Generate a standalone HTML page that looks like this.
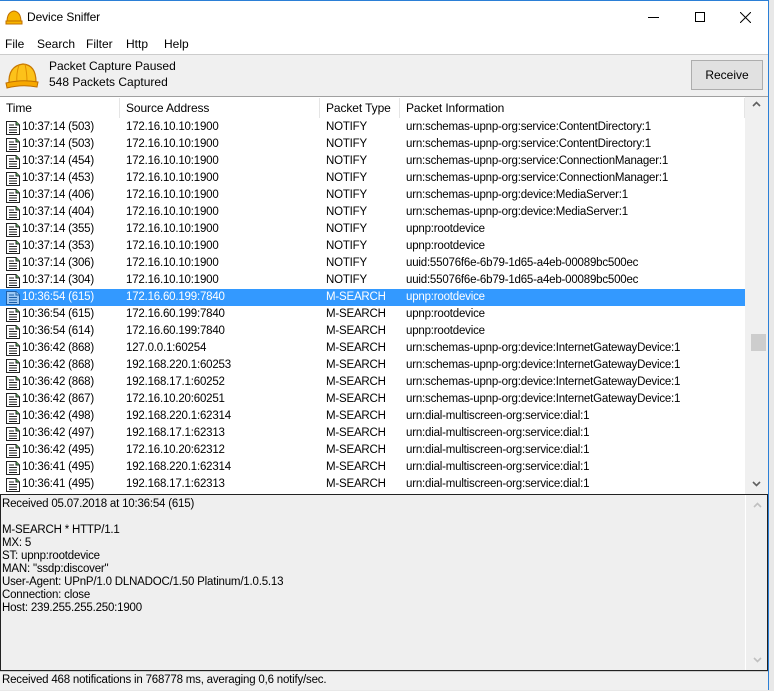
<!DOCTYPE html>
<html><head><meta charset="utf-8"><style>
*{margin:0;padding:0;box-sizing:border-box}
body{width:774px;height:691px;background:#e8e8e8;font-family:"Liberation Sans",sans-serif;font-size:12px;color:#000;position:relative;overflow:hidden}
.win{position:absolute;left:0;top:0;width:769px;height:690px;background:#f0f0f0;border-right:1px solid #2b7fd6;border-bottom:1px solid #2b7fd6;border-top:1px solid #2b7fd6}
.abs{position:absolute}
.title{left:0;top:0;width:768px;height:32px;background:#fff}
.menu{left:0;top:32px;width:768px;height:21px;background:#fff;font-size:12px}
.menu span{position:absolute;top:4px}
.info{left:0;top:53px;width:768px;height:43px;background:#f0f0f0;border-top:1px solid #ccc;border-bottom:1px solid #a0a0a0}
.btn{left:691px;top:5px;width:72px;height:30px;border:1px solid #adadad;background:#e1e1e1;text-align:center;line-height:28px}
.list{left:0;top:96px;width:768px;height:397px;background:#fff;overflow:hidden;font-size:11.5px;letter-spacing:-0.2px}
.hdr{left:0;top:0;width:745px;height:21px;background:#fff;font-size:12px;letter-spacing:-0.1px}
.hdr span{position:absolute;top:4px}
.sep{position:absolute;top:1px;width:1px;height:20px;background:#e5e5e5}
.row{position:absolute;left:0;width:745px;height:17px}
.row span{position:absolute;top:2px;white-space:nowrap}
.sel{background:#3399ff;color:#fff}
.ic{position:absolute;left:5px;top:1px}
.sb{left:745px;top:0;width:23px;height:397px;background:#f0f0f0}
.det{left:0;top:493px;width:768px;height:177px;border:1px solid #222;background:#efefef}
.det pre{font-family:"Liberation Sans",sans-serif;font-size:11.5px;letter-spacing:-0.2px;line-height:13px;position:absolute;left:1px;top:3px}
.status{left:0;top:670px;width:768px;height:19px;background:#f0f0f0;border-top:1px solid #ccc;font-size:11.5px;letter-spacing:-0.2px}
</style></head><body>
<div class="win">
<div class="abs title">
 <svg class="abs" style="left:5px;top:8px" width="18" height="16" viewBox="0 0 18 16"><path d="M2 13 Q2 3 9 2 Q16 3 16 13 Z" fill="#f7b500" stroke="#c07000"/><rect x="1" y="12" width="16" height="3" fill="#f7b500" stroke="#c07000"/></svg>
 <span class="abs" style="left:27px;top:9px;font-size:12px;letter-spacing:-0.1px">Device Sniffer</span>
 <div class="abs" style="left:648px;top:16px;width:11px;height:1px;background:#000"></div>
 <div class="abs" style="left:695px;top:11px;width:10px;height:10px;border:1px solid #000"></div>
 <svg class="abs" style="left:740px;top:11px" width="11" height="11"><path d="M0 0L11 11M11 0L0 11" stroke="#000" stroke-width="1"/></svg>
</div>
<div class="abs menu"><span style="left:5px">File</span><span style="left:37px">Search</span><span style="left:86px">Filter</span><span style="left:126px">Http</span><span style="left:164px">Help</span></div>
<div class="abs info">
 <svg class="abs" style="left:5px;top:5px" width="34" height="30" viewBox="0 0 34 30"><path d="M4 24 Q3 6 18 4 Q31 5 31 22 Z" fill="#fcc21a" stroke="#c87800" stroke-width="1.2"/><path d="M14 5 Q11 14 12 23 M20 4 Q22 13 22 22" stroke="#e09000" fill="none"/><path d="M1 23 Q17 19 33 22 L32 27 Q17 24 2 28 Z" fill="#f7a800" stroke="#c07000"/></svg>
 <span class="abs" style="left:49px;top:4px">Packet Capture Paused</span>
 <span class="abs" style="left:49px;top:20px">548 Packets Captured</span>
 <div class="abs btn">Receive</div>
</div>
<div class="abs list">
 <div class="abs hdr"><span style="left:6px">Time</span><div class="sep" style="left:119px"></div><span style="left:126px">Source Address</span><div class="sep" style="left:319px"></div><span style="left:326px">Packet Type</span><div class="sep" style="left:399px"></div><span style="left:406px">Packet Information</span><div class="sep" style="left:744px"></div></div>
 <div id="rows"></div>
 <div class="abs sb">
  <svg class="abs" style="left:7px;top:4px" width="9" height="6"><path d="M1 5L4.5 1.5L8 5" stroke="#606060" stroke-width="1.6" fill="none"/></svg>
  <div class="abs" style="left:6px;top:237px;width:15px;height:17px;background:#cdcdcd"></div>
  <svg class="abs" style="left:7px;top:384px" width="9" height="6"><path d="M1 1L4.5 4.5L8 1" stroke="#606060" stroke-width="1.6" fill="none"/></svg>
 </div>
</div>
<div class="abs det">
<pre>Received 05.07.2018 at 10:36:54 (615)

M-SEARCH * HTTP/1.1
MX: 5
ST: upnp:rootdevice
MAN: "ssdp:discover"
User-Agent: UPnP/1.0 DLNADOC/1.50 Platinum/1.0.5.13
Connection: close
Host: 239.255.255.250:1900</pre>
 <div class="abs" style="left:744px;top:0;width:1px;height:175px;background:#fff"></div>
 <svg class="abs" style="left:752px;top:7px" width="9" height="6"><path d="M1 5L4.5 1.5L8 5" stroke="#c0c0c0" stroke-width="1.6" fill="none"/></svg>
 <svg class="abs" style="left:752px;top:162px" width="9" height="6"><path d="M1 1L4.5 4.5L8 1" stroke="#c0c0c0" stroke-width="1.6" fill="none"/></svg>
</div>
<div class="abs status"><span class="abs" style="left:2px;top:2px">Received 468 notifications in 768778 ms, averaging 0,6 notify/sec.</span></div>
</div>
<script>
var d=[
["10:37:14 (503)","172.16.10.10:1900","NOTIFY","urn:schemas-upnp-org:service:ContentDirectory:1"],
["10:37:14 (503)","172.16.10.10:1900","NOTIFY","urn:schemas-upnp-org:service:ContentDirectory:1"],
["10:37:14 (454)","172.16.10.10:1900","NOTIFY","urn:schemas-upnp-org:service:ConnectionManager:1"],
["10:37:14 (453)","172.16.10.10:1900","NOTIFY","urn:schemas-upnp-org:service:ConnectionManager:1"],
["10:37:14 (406)","172.16.10.10:1900","NOTIFY","urn:schemas-upnp-org:device:MediaServer:1"],
["10:37:14 (404)","172.16.10.10:1900","NOTIFY","urn:schemas-upnp-org:device:MediaServer:1"],
["10:37:14 (355)","172.16.10.10:1900","NOTIFY","upnp:rootdevice"],
["10:37:14 (353)","172.16.10.10:1900","NOTIFY","upnp:rootdevice"],
["10:37:14 (306)","172.16.10.10:1900","NOTIFY","uuid:55076f6e-6b79-1d65-a4eb-00089bc500ec"],
["10:37:14 (304)","172.16.10.10:1900","NOTIFY","uuid:55076f6e-6b79-1d65-a4eb-00089bc500ec"],
["10:36:54 (615)","172.16.60.199:7840","M-SEARCH","upnp:rootdevice"],
["10:36:54 (615)","172.16.60.199:7840","M-SEARCH","upnp:rootdevice"],
["10:36:54 (614)","172.16.60.199:7840","M-SEARCH","upnp:rootdevice"],
["10:36:42 (868)","127.0.0.1:60254","M-SEARCH","urn:schemas-upnp-org:device:InternetGatewayDevice:1"],
["10:36:42 (868)","192.168.220.1:60253","M-SEARCH","urn:schemas-upnp-org:device:InternetGatewayDevice:1"],
["10:36:42 (868)","192.168.17.1:60252","M-SEARCH","urn:schemas-upnp-org:device:InternetGatewayDevice:1"],
["10:36:42 (867)","172.16.10.20:60251","M-SEARCH","urn:schemas-upnp-org:device:InternetGatewayDevice:1"],
["10:36:42 (498)","192.168.220.1:62314","M-SEARCH","urn:dial-multiscreen-org:service:dial:1"],
["10:36:42 (497)","192.168.17.1:62313","M-SEARCH","urn:dial-multiscreen-org:service:dial:1"],
["10:36:42 (495)","172.16.10.20:62312","M-SEARCH","urn:dial-multiscreen-org:service:dial:1"],
["10:36:41 (495)","192.168.220.1:62314","M-SEARCH","urn:dial-multiscreen-org:service:dial:1"],
["10:36:41 (495)","192.168.17.1:62313","M-SEARCH","urn:dial-multiscreen-org:service:dial:1"]];
var h="";
d.forEach(function(r,i){var s=i==10;
h+='<div class="row'+(s?' sel':'')+'" style="top:'+(22+i*17)+'px">'+
'<svg class="ic" width="16" height="16" viewBox="0 0 16 16"><path d="M1.5 1.5H11L14.5 5V14.5H1.5Z" fill="'+(s?'#9cc8f4':'#fff')+'" stroke="'+(s?'#1d5fa8':'#222')+'"/><path d="M11 1.5V5H14.5" fill="'+(s?'#9cc8f4':'#5cb85c')+'" stroke="'+(s?'#1d5fa8':'#222')+'"/><path d="M4 5H9M4 7.5H12M4 10H12M4 12.5H12" stroke="'+(s?'#1d5fa8':'#222')+'"/></svg>'+
'<span style="left:22px">'+r[0]+'</span><span style="left:126px">'+r[1]+'</span><span style="left:326px">'+r[2]+'</span><span style="left:406px">'+r[3]+'</span></div>';});
document.getElementById('rows').innerHTML=h;
</script>
</body></html>
